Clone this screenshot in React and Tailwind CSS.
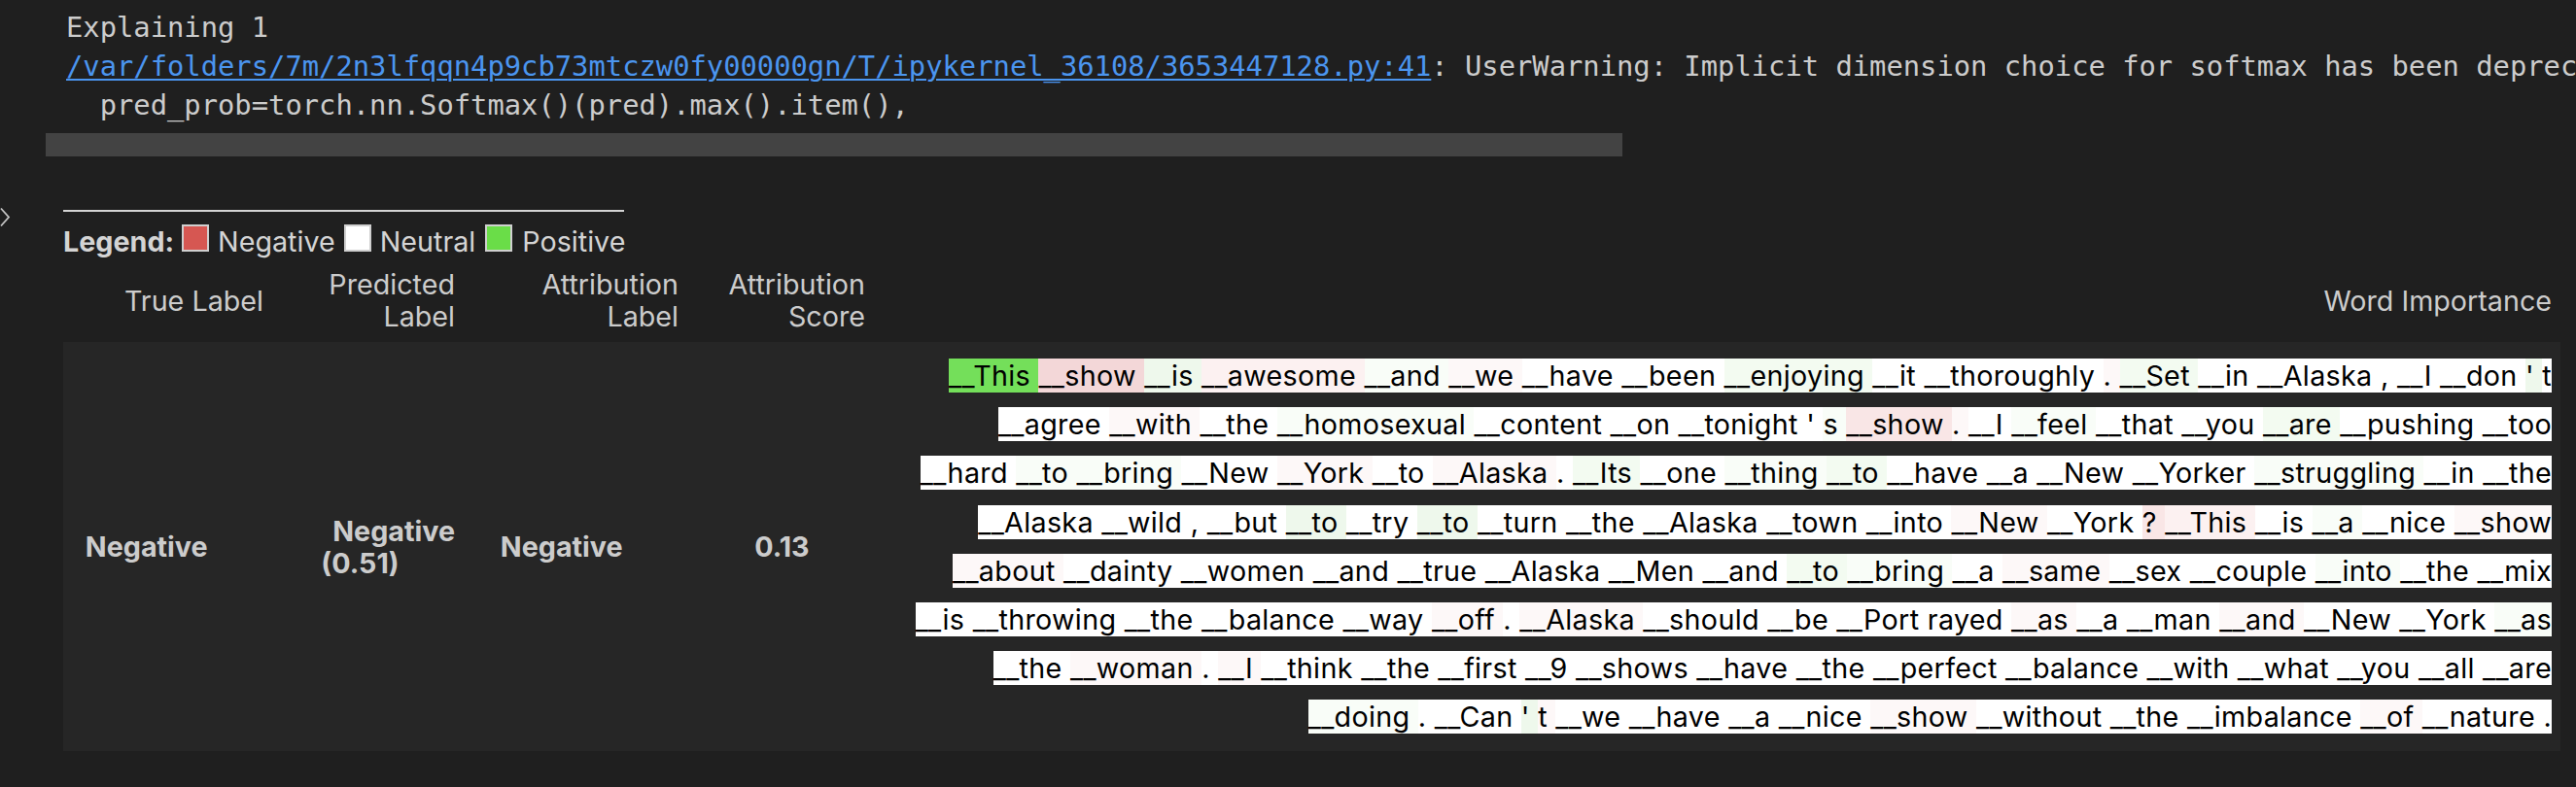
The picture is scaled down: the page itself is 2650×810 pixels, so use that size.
import React from 'react';

// captum-style attribution colours, as they appear on screen
const MARK_BG = {
  G: 'bg-[#74df5a]',
  p3: 'bg-[#f3d7d8]',
  p2: 'bg-[#f9e6e6]',
  p1: 'bg-[#fcf1f1]',
  p0: 'bg-[#fdf8f8]',
  g2: 'bg-[#eef8ec]',
  g1: 'bg-[#f3fbf1]',
  g0: 'bg-[#f9fdf8]',
  w: 'bg-white',
};

// one entry per wrapped line, "token:colour" (no colour = white)
const LINES = [
  "__This:G __show:p3 __is:g2 __awesome:p1 __and:g0 __we:p0 __have __been __enjoying:g1 __it __thoroughly .:p0 __Set:g1 __in __Alaska , __I __don ':g2 t",
  "__agree __with:p0 __the __homosexual:g0 __content __on __tonight ' s:g0 __show:p2 .:p0 __I __feel:g0 __that __you __are:g1 __pushing __too",
  "__hard __to:g0 __bring:g0 __New __York:p0 __to __Alaska:p0 . __Its:g1 __one __thing:g0 __to:g1 __have __a __New __Yorker __struggling:g0 __in __the",
  "__Alaska __wild , __but __to:g2 __try __to:g2 __turn __the __Alaska __town __into __New:p0 __York ?:p2 __This:p1 __is __a:g0 __nice __show:p0",
  "__about:p0 __dainty __women __and __true __Alaska __Men __and __to:g1 __bring:g0 __a __same:p0 __sex __couple __into:g0 __the __mix",
  "__is __throwing __the __balance __way __off:p0 . __Alaska:p0 __should __be __Port rayed __as:p0 __a __man __and:p0 __New __York __as:g0",
  "__the __woman:p0 . __I:p0 __think __the __first __9 __shows __have __the __perfect __balance __with __what __you __all __are",
  "__doing:g0 . __Can ':g2 t:p0 __we __have __a __nice __show:p0 __without __the __imbalance __of:p0 __nature .",
];

const parseLine = (line) =>
  line.split(' ').map((tok) => {
    const idx = tok.lastIndexOf(':');
    if (idx > 0) return { text: tok.slice(0, idx), color: tok.slice(idx + 1) };
    return { text: tok, color: 'w' };
  });

const LegendBox = ({ color }) => (
  <span className={`inline-block w-[28px] h-[28px] border-2 border-[#cfcfcf] align-baseline ${color}`} />
);

function Legend() {
  return (
    <div className="ml-[65px] mt-[55px] w-[577px] border-t-2 border-[#d4d4d4] pt-[13px] text-[#d4d4d4] leading-[33px] whitespace-nowrap">
      <b className="font-bold">Legend:</b>
      <span className="ml-[8px]"><LegendBox color="bg-[#d65752]" /></span>
      <span className="ml-[9px]">Negative</span>
      <span className="ml-[9px]"><LegendBox color="bg-white" /></span>
      <span className="ml-[9px]">Neutral</span>
      <span className="ml-[10px]"><LegendBox color="bg-[#6add48]" /></span>
      <span className="ml-[10px]">Positive</span>
    </div>
  );
}

function AttributionTable() {
  return (
    <div className="ml-[65px] mt-[1px] w-[2569px]">
      {/* header row */}
      <div className="grid grid-cols-[216px_197px_230px_192px_1fr] items-center text-right leading-[33px] text-[#cccccc]">
        <div className="p-[10px]">True Label</div>
        <div className="p-[10px]">Predicted<br />Label</div>
        <div className="p-[10px]">Attribution<br />Label</div>
        <div className="p-[10px]">Attribution<br />Score</div>
        <div className="py-[10px] pl-[10px] pr-[9px]">Word Importance</div>
      </div>

      {/* data row */}
      <div className="grid grid-cols-[216px_197px_230px_192px_1fr] items-center text-right bg-[#262626] text-[#cccccc] font-bold leading-[33px]">
        <div className="p-[10px]"><span className="pr-[2em]">Negative</span></div>
        <div className="p-[10px]">
          <div>Negative</div>
          <div className="pr-[2em]">(0.51)</div>
        </div>
        <div className="p-[10px]"><span className="pr-[2em]">Negative</span></div>
        <div className="p-[10px]"><span className="pr-[2em]">0.13</span></div>
        <div className="pt-[10px] pb-[9.5px] pl-[10px] pr-[9px] font-normal tracking-[0.32px]">
          {LINES.map((line, i) => (
            <div key={i} className="leading-[50.2px] whitespace-nowrap">
              {parseLine(line).map((t, j) => (
                <span key={j} className={`${MARK_BG[t.color]} text-black`}>{t.text + ' '}</span>
              ))}
            </div>
          ))}
        </div>
      </div>
    </div>
  );
}

export default function App() {
  return (
    <div className="relative w-[2650px] h-[810px] overflow-hidden bg-[#1f1f1f] text-[28.7px] font-['Inter','Liberation_Sans',sans-serif]">
      {/* stdout / stderr of the cell */}
      <div className="pl-[68px] pt-[8px] font-['DejaVu_Sans_Mono',monospace] text-[28.8px] leading-[40.2px] text-[#cccccc] whitespace-pre">
        <div>Explaining 1</div>
        <div>
          <a className="text-[#4b95ef] underline decoration-2 underline-offset-[3px]">/var/folders/7m/2n3lfqqn4p9cb73mtczw0fy00000gn/T/ipykernel_36108/3653447128.py:41</a>
          : UserWarning: Implicit dimension choice for softmax has been deprecated. Change the call to include dim=X as an argument.
        </div>
        <div>  pred_prob=torch.nn.Softmax()(pred).max().item(),</div>
      </div>
      {/* horizontal scrollbar thumb */}
      <div className="ml-[47px] mt-[8.4px] w-[1622px] h-[24px] bg-[#434343]" />

      {/* output collapse chevron in the gutter */}
      <svg className="absolute left-[0px] top-[213px]" width="11" height="21" viewBox="0 0 11 21">
        <polyline points="1,1.5 9,10.5 1,19.5" fill="none" stroke="#c5c5c5" strokeWidth="1.8" />
      </svg>

      <Legend />
      <AttributionTable />
    </div>
  );
}
